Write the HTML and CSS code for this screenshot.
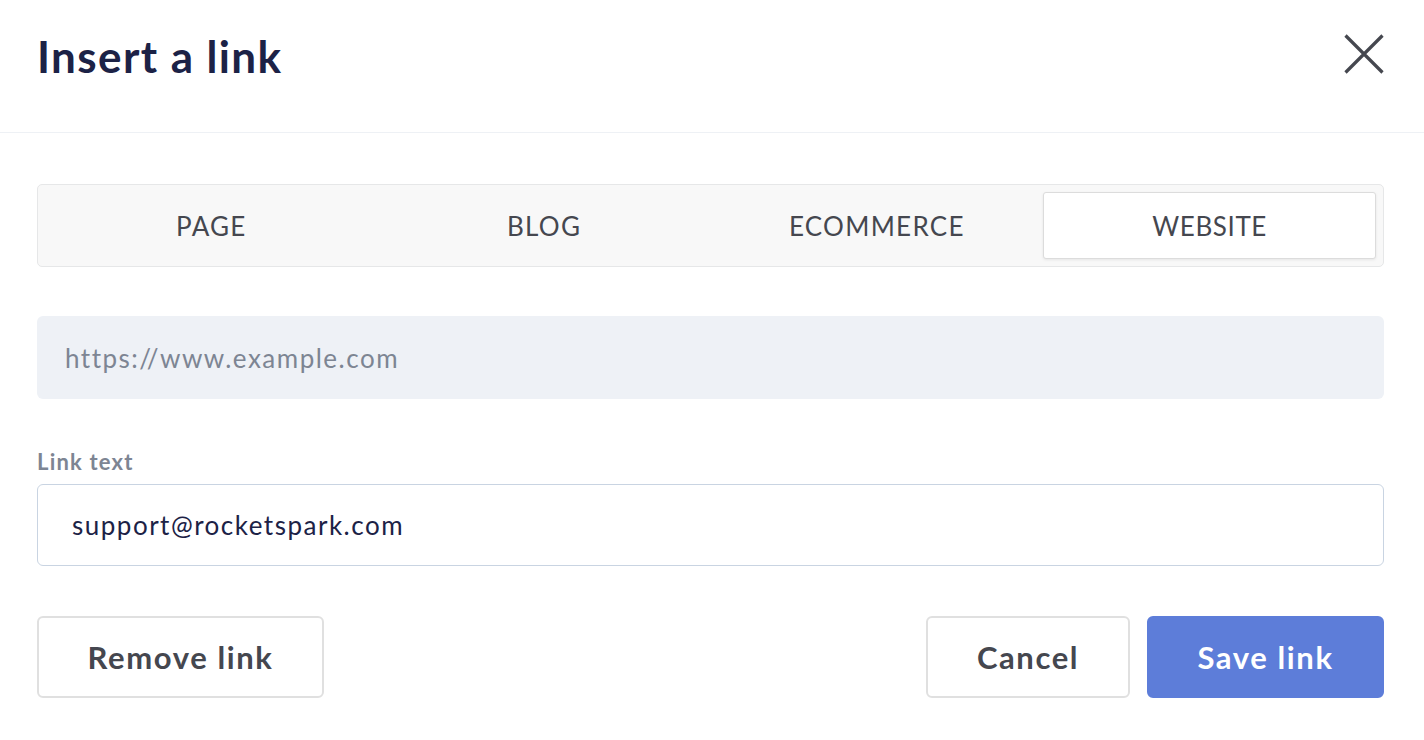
FILE: index.html
```html
<!DOCTYPE html>
<html lang="en">
<head>
<meta charset="utf-8">
<title>Insert a link</title>
<link rel="stylesheet" href="styles.css">
</head>
<body>
<div class="modal">
  <header class="modal-header">
    <h1 class="title">Insert a link</h1>
    <button class="close" aria-label="Close">
      <svg width="40" height="40" viewBox="0 0 40 40"><path d="M1.5 1.5 L38.5 38.5 M38.5 1.5 L1.5 38.5" stroke="#45474f" stroke-width="3.2" fill="none"/></svg>
    </button>
  </header>
  <main class="modal-body">
    <div class="tabs">
      <div class="tab">PAGE</div>
      <div class="tab">BLOG</div>
      <div class="tab">ECOMMERCE</div>
      <div class="tab active">WEBSITE</div>
    </div>
    <div class="url-field">https://www.example.com</div>
    <label class="label">Link text</label>
    <div class="text-field">support@rocketspark.com</div>
    <div class="actions">
      <button class="btn btn-remove">Remove link</button>
      <div class="spacer"></div>
      <button class="btn btn-cancel">Cancel</button>
      <button class="btn btn-primary">Save link</button>
    </div>
  </main>
</div>
</body>
</html>
```

FILE: styles.css
```css
* { box-sizing: border-box; }
html, body { margin: 0; padding: 0; background: #ffffff; }
body { font-family: Lato, "Open Sans", sans-serif; color: #45474f; }

.modal { width: 1424px; }

.modal-header {
  height: 133px;
  display: flex;
  align-items: center;
  justify-content: space-between;
  padding: 0 40px 0 37px;
  border-bottom: 1px solid #eef1f5;
}
.title {
  margin: 0;
  font-size: 44px;
  font-weight: 700;
  color: #1c2246;
  letter-spacing: 1.4px;
  padding-bottom: 20px;
}
.close {
  border: 0; background: none; padding: 0; width: 40px; height: 40px;
  margin-bottom: 24px;
  display: flex;
}

.modal-body { padding: 51px 40px 0 37px; }

.tabs {
  display: grid;
  grid-template-columns: repeat(4, 1fr);
  padding: 7px;
  height: 83px;
  background: #f8f8f8;
  border: 1.5px solid #e6e7e8;
  border-radius: 5px;
}
.tab {
  display: flex;
  align-items: center;
  justify-content: center;
  font-size: 26px;
  letter-spacing: 1.3px;
  color: #45474f;
}
.tab.active {
  background: #ffffff;
  border: 1.5px solid #dcdcdc;
  border-radius: 3px;
  box-shadow: 0 1px 3px rgba(0,0,0,0.08);
  letter-spacing: 0.6px;
}

.url-field {
  margin-top: 49px;
  height: 83px;
  background: #eef1f6;
  border-radius: 6px;
  padding: 0 28px;
  display: flex;
  align-items: center;
  font-size: 26px;
  color: #7d8593;
  letter-spacing: 1.5px;
}

.label {
  display: block;
  margin-top: 50px;
  font-size: 22px;
  font-weight: 700;
  color: #7d8593;
  line-height: 25px;
  letter-spacing: 1.2px;
}
.text-field {
  margin-top: 10px;
  height: 82px;
  border: 1.5px solid #c9d4e2;
  border-radius: 6px;
  padding: 0 34px;
  display: flex;
  align-items: center;
  font-size: 26px;
  color: #1c2246;
  letter-spacing: 1.5px;
}

.actions {
  display: flex;
  margin-top: 50px;
  gap: 17px;
}
.spacer { flex: 1; }
.btn {
  height: 82px;
  border: 2px solid #e0e0e0;
  border-radius: 6px;
  background: #ffffff;
  font-family: inherit;
  font-size: 31px;
  font-weight: 700;
  color: #45474f;
  letter-spacing: 1.6px;
  padding: 0;
}
.btn-remove { width: 287px; }
.btn-cancel { width: 204px; }
.btn-primary {
  width: 237px;
  background: #5d7dd9;
  border-color: #5d7dd9;
  color: #ffffff;
}
```
